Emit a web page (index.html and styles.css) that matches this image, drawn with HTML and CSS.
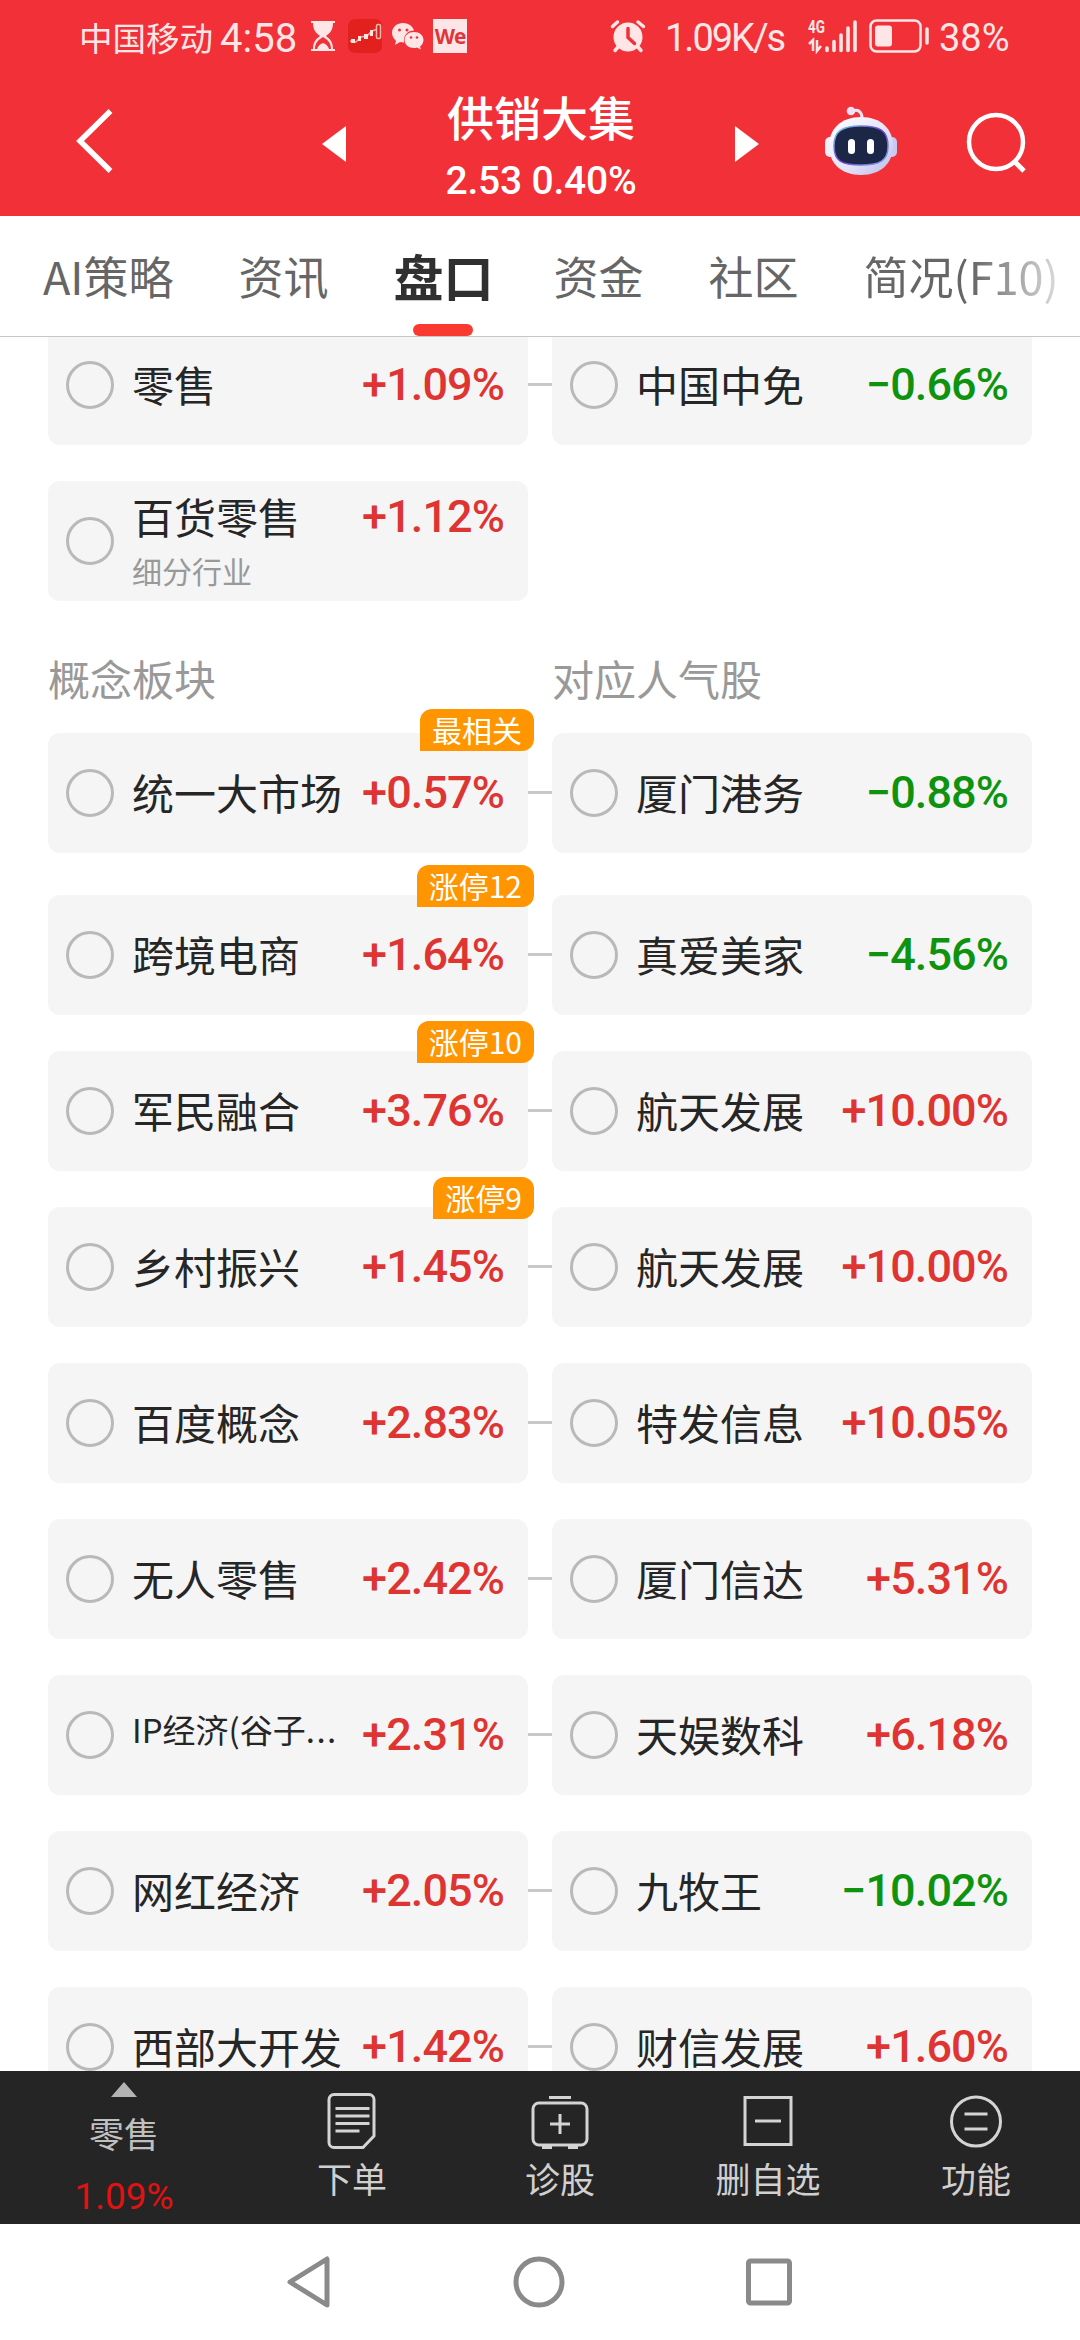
FILE: index.html
```
<!DOCTYPE html>
<html lang="zh-CN">
<head>
<meta charset="utf-8">
<title>供销大集</title>
<link rel="stylesheet" href="styles.css">
</head>
<body>
<div class="statusbar">
  <span class="carrier">中国移动</span>
  <span class="clock">4:58</span>
  <svg class="hourglass" width="24" height="31" viewBox="0 0 24 31"><path d="M0 0h24v2h-2c0 7-3 10-7 13 4 3 7 6 7 13h2v2H0v-2h2c0-7 3-10 7-13C5 12 2 9 2 2H0z" fill="#ffe6e6"/><path d="M4 28c0-6 3-9 8-12 5 3 8 6 8 12l-2 0c-1-3-3-5-6-6-3 1-5 3-6 6z" fill="#f13037"/></svg>
  <svg class="appicon" width="34" height="34" viewBox="0 0 34 34"><rect width="34" height="34" rx="7" fill="#e2211f"/><path d="M2 22l6 1 5-5 6-1 5-5 6-2" fill="none" stroke="#f3a9a0" stroke-width="1.500"/><path d="M3 20h4v4H3zM10 17h3v5h-3zM16 15h4v5h-4zM22 11h3v6h-3z" fill="#ffe6e6"/><rect x="28.500" y="5.500" width="4" height="14" rx="1.500" fill="#d81e1e" stroke="#f6b9a8" stroke-width="1.500"/></svg>
  <svg class="wechat" width="32" height="28" viewBox="0 0 32 28"><path d="M11 1C5 1 0 5 0 11c0 3 2 6 4 8l-1 4 5-3c1 .4 3 .4 4 .4C11 13 16 8.500 22 8.500 21 4 16 1 11 1z" fill="#ffe6e6"/><path d="M22 10c-5.500 0-9.500 3.500-9.500 8s4 8 9.500 8c1 0 2 0 3-.5l4 2-1-3c2-1.500 3.500-4 3.500-6.500 0-4.500-4-8-9.500-8z" fill="#ffe6e6"/><g fill="#f13037"><circle cx="7.500" cy="8" r="1.500"/><circle cx="15" cy="8" r="1.500"/><circle cx="19" cy="15.500" r="1.300"/><circle cx="25" cy="15.500" r="1.300"/></g></svg>
  <span class="we">We</span>
  <svg class="alarm" width="34" height="32" viewBox="0 0 34 32"><circle cx="17" cy="17" r="14.500" fill="#ffe6e6"/><path d="M1.500 6.500l5-4.500M32.500 6.500L27 2M7 27l-3 3.500M27 27l3 3.500" stroke="#ffe6e6" stroke-width="3.500" stroke-linecap="round"/><path d="M17 8.500v9l6.500 6" fill="none" stroke="#f13037" stroke-width="3.500" stroke-linecap="round"/></svg>
  <span class="speed">1.09K/s</span>
  <svg class="signal" width="50" height="34" viewBox="0 0 50 34"><text x="0" y="14" textLength="17" lengthAdjust="spacingAndGlyphs" class="g4">4G</text><path d="M1 25l4-4v11M9 21v11l4-5" fill="none" stroke="#ffe6e6" stroke-width="2.500"/><path d="M19 29v2.500M26 22.500v9M33 16v15.500M40 9v22.500M47 3v28.500" stroke="#ffe6e6" stroke-width="3.600" stroke-linecap="round"/></svg>
  <svg class="battery" width="60" height="34" viewBox="0 0 60 34"><rect x="1.500" y="1.500" width="50" height="31" rx="6" fill="none" stroke="#ffe6e6" stroke-width="2.500"/><rect x="6" y="6.500" width="17" height="21" rx="3" fill="#ffe6e6"/><path d="M58 10v14" stroke="#ffe6e6" stroke-width="3.500" stroke-linecap="round"/></svg>
  <span class="pct">38%</span>
</div>

<div class="header">
  <svg class="back" width="38" height="66" viewBox="0 0 38 66"><path d="M34.500 3L4 33l30.500 30" fill="none" stroke="#fff" stroke-width="5.500"/></svg>
  <svg class="prev" width="24" height="36" viewBox="0 0 24 36"><path d="M24 0v36L0 18z" fill="#fff"/></svg>
  <div class="title">
    <div class="name">供销大集</div>
    <div class="price">2.53 0.40%</div>
  </div>
  <svg class="next" width="24" height="36" viewBox="0 0 24 36"><path d="M0 0v36l24-18z" fill="#fff"/></svg>
  <svg class="robot" width="72" height="70" viewBox="0 0 72 70">
    <defs>
      <linearGradient id="shell" x1="0" y1="0" x2="1" y2="1"><stop offset="0" stop-color="#fff"/><stop offset=".6" stop-color="#e3e1f6"/><stop offset="1" stop-color="#b9bce8"/></linearGradient>
      <linearGradient id="rim" x1="0" y1="0" x2="1" y2="1"><stop offset="0" stop-color="#6fd3e8"/><stop offset=".5" stop-color="#6b3fd0"/><stop offset="1" stop-color="#7fa8f0"/></linearGradient>
    </defs>
    <path d="M28 5c5-2 9 1 9 7" fill="none" stroke="#f1e4f3" stroke-width="3"/>
    <circle cx="26" cy="5" r="4.300" fill="#efe2f4"/>
    <rect x="0" y="31" width="11" height="20" rx="5" fill="#f0effa"/>
    <rect x="61" y="31" width="11" height="20" rx="5" fill="#c5cbf1"/>
    <path d="M36 11c20 0 32 12 32 29S56 69 36 69 4 57 4 40s12-29 32-29z" fill="url(#shell)"/>
    <path d="M36 20c19 0 27 5 27 20S55 59 36 59 9 55 9 40s8-20 27-20z" fill="#1c2747" stroke="url(#rim)" stroke-width="1.500"/>
    <rect x="23" y="33" width="7" height="15" rx="3.500" fill="#fff"/><rect x="42" y="33" width="7" height="15" rx="3.500" fill="#fff"/>
  </svg>
  <svg class="search" width="62" height="62" viewBox="0 0 62 62"><circle cx="30" cy="30" r="27" fill="none" stroke="#fff" stroke-width="4.500"/><path d="M48 49l10 10" stroke="#fff" stroke-width="5"/></svg>
</div>

<div class="tabs">
  <span class="tab">AI策略</span>
  <span class="tab">资讯</span>
  <span class="tab active">盘口</span>
  <span class="tab">资金</span>
  <span class="tab">社区</span>
  <span class="tab last">简况(F10)</span>
</div>

<div class="content">
  <div class="row">
    <div class="card"><i class="radio"></i><span class="label">零售</span><b class="up">+1.09%</b></div>
    <div class="card"><i class="radio"></i><span class="label">中国中免</span><b class="down">−0.66%</b></div>
  </div>
  <div class="row single">
    <div class="card"><i class="radio"></i><span class="label two">百货零售<small>细分行业</small></span><b class="up raised">+1.12%</b></div>
  </div>
  <div class="heads"><span>概念板块</span><span>对应人气股</span></div>
  <div class="row first">
    <div class="card"><em class="badge">最相关</em><i class="radio"></i><span class="label">统一大市场</span><b class="up">+0.57%</b></div>
    <div class="card"><i class="radio"></i><span class="label">厦门港务</span><b class="down">−0.88%</b></div>
  </div>
  <div class="row">
    <div class="card"><em class="badge">涨停12</em><i class="radio"></i><span class="label">跨境电商</span><b class="up">+1.64%</b></div>
    <div class="card"><i class="radio"></i><span class="label">真爱美家</span><b class="down">−4.56%</b></div>
  </div>
  <div class="row">
    <div class="card"><em class="badge">涨停10</em><i class="radio"></i><span class="label">军民融合</span><b class="up">+3.76%</b></div>
    <div class="card"><i class="radio"></i><span class="label">航天发展</span><b class="up">+10.00%</b></div>
  </div>
  <div class="row">
    <div class="card"><em class="badge">涨停9</em><i class="radio"></i><span class="label">乡村振兴</span><b class="up">+1.45%</b></div>
    <div class="card"><i class="radio"></i><span class="label">航天发展</span><b class="up">+10.00%</b></div>
  </div>
  <div class="row">
    <div class="card"><i class="radio"></i><span class="label">百度概念</span><b class="up">+2.83%</b></div>
    <div class="card"><i class="radio"></i><span class="label">特发信息</span><b class="up">+10.05%</b></div>
  </div>
  <div class="row">
    <div class="card"><i class="radio"></i><span class="label">无人零售</span><b class="up">+2.42%</b></div>
    <div class="card"><i class="radio"></i><span class="label">厦门信达</span><b class="up">+5.31%</b></div>
  </div>
  <div class="row">
    <div class="card"><i class="radio"></i><span class="label small">IP经济(谷子<span class="dots">...</span></span><b class="up">+2.31%</b></div>
    <div class="card"><i class="radio"></i><span class="label">天娱数科</span><b class="up">+6.18%</b></div>
  </div>
  <div class="row">
    <div class="card"><i class="radio"></i><span class="label">网红经济</span><b class="up">+2.05%</b></div>
    <div class="card"><i class="radio"></i><span class="label">九牧王</span><b class="down">−10.02%</b></div>
  </div>
  <div class="row">
    <div class="card"><i class="radio"></i><span class="label">西部大开发</span><b class="up">+1.42%</b></div>
    <div class="card"><i class="radio"></i><span class="label">财信发展</span><b class="up">+1.60%</b></div>
  </div>
</div>

<div class="toolbar">
  <div class="sector">
    <svg width="26" height="15" viewBox="0 0 26 15"><path d="M13 0l13 15H0z" fill="#b4b4b4"/></svg>
    <span class="sname">零售</span>
    <span class="schg">1.09%</span>
  </div>
  <div class="tool"><svg width="52" height="58" viewBox="0 0 52 58"><path d="M8 2.500h35a5 5 0 0 1 5 5V44L37 55.500H8a5 5 0 0 1-5-5v-43a5 5 0 0 1 5-5z"/><path d="M9.500 16.500h34M9.500 24h34M9.500 31.500h34M9.500 39h24"/></svg><span>下单</span></div>
  <div class="tool"><svg width="60" height="58" viewBox="0 0 60 58"><rect x="3" y="11" width="54" height="42" rx="6"/><path d="M19 5.500h22M30 22v20M20 32h20M12 55.500h10M38 55.500h10"/></svg><span>诊股</span></div>
  <div class="tool"><svg width="52" height="58" viewBox="0 0 52 58"><rect x="3" y="5.500" width="46" height="47"/><path d="M13 29h26"/></svg><span>删自选</span></div>
  <div class="tool"><svg width="54" height="58" viewBox="0 0 54 58"><circle cx="27" cy="29.500" r="24.500"/><path d="M15.500 22h23M15.500 37h23"/></svg><span>功能</span></div>
</div>

<div class="navbar">
  <svg width="46" height="54" viewBox="0 0 46 54"><path d="M41 4v46L4 27z"/></svg>
  <svg width="54" height="54" viewBox="0 0 54 54"><circle cx="27" cy="27" r="23"/></svg>
  <svg width="46" height="54" viewBox="0 0 46 54"><rect x="2.500" y="6" width="41" height="42" rx="2"/></svg>
</div>
</body>
</html>
```
FILE: styles.css
```
* { box-sizing: border-box; }
body { margin:0; width:1080px; height:2340px; overflow:hidden; background:#fff; color:#262626; font-family:"Noto Sans CJK SC", sans-serif; display:flex; flex-direction:column; }
svg { display:block; flex:none; overflow:visible; }

.statusbar { height:72px; background:#f13037; color:#ffe6e6; display:flex; align-items:center; padding-left:79px; white-space:nowrap; flex:none; }
.carrier { font-size:33.500px; font-weight:400; width:141px; }
.clock { font-size:40px; font-family:Roboto, sans-serif; width:91px; padding-top:5px; }
.hourglass { margin-right:13px; }
.appicon { margin-right:10px; }
.wechat { margin-right:9px; }
.we { width:34px; height:34px; background:#ffe6e6; color:#e0353a; font:700 21px/34px "Open Sans", sans-serif; text-align:center; letter-spacing:-1px; }
.alarm { margin-left:144px; }
.speed { font:400 38px Roboto, sans-serif; letter-spacing:-2px; width:143px; margin-left:20px; padding-top:4px; }
.g4 { font:700 18px Roboto, sans-serif; fill:#ffe6e6; }
.battery { margin:0 10px 0 11px; }
.pct { font:400 38px Roboto, sans-serif; padding-top:4px; }

.header { height:144px; background:#f13037; color:#fff; display:flex; align-items:center; padding-left:76px; flex:none; }
.back { margin-bottom:6px; }
.prev { margin-left:208px; }
.title { width:230px; margin-left:80px; text-align:center; flex:none; white-space:nowrap; padding-top:4px; }
.name { font-size:47px; line-height:70px; font-weight:500; }
.price { font:500 39px/60px Roboto, sans-serif; letter-spacing:-.2px; }
.next { margin-left:79px; }
.robot { margin-left:66px; margin-bottom:6px; }
.search { margin-left:69px; margin-bottom:2px; }

.tabs { height:121px; border-bottom:1.500px solid #c6c6c6; display:flex; align-items:center; color:#666; font-size:45px; flex:none; padding-left:43px; white-space:nowrap; }
.tab { margin-right:65px; height:120px; line-height:119px; }
.active { color:#303030; font-size:50px; font-weight:700; margin-right:60px; position:relative; }
.active::after { content:""; position:absolute; left:19px; bottom:0; width:60px; height:12px; border-radius:6px; background:#fa3a30; }
.last { margin-right:0; background:linear-gradient(90deg, #666 55%, #ddd 100%); -webkit-background-clip:text; color:transparent; }

.content { flex:1; overflow:hidden; padding:0 48px; }
.row { display:flex; gap:24px; margin-bottom:36px; position:relative; }
.row::before { content:""; position:absolute; left:480px; top:58px; width:24px; height:3px; background:#c8c8c8; }
.row.single::before { display:none; }
.row:first-child { margin-top:-12px; }
.card { width:480px; height:120px; background:#f5f5f5; border-radius:12px; display:flex; align-items:center; padding:0 24px 0 18px; position:relative; white-space:nowrap; }
.radio { width:48px; height:48px; border:3px solid #b9b9b9; border-radius:50%; margin-right:18px; flex:none; }
.label { font-size:42px; line-height:60px; margin-bottom:2px; }
.small { font-size:33px; line-height:50px; margin-bottom:12px; }
.dots { letter-spacing:1.500px; }
.two { display:flex; flex-direction:column; margin-bottom:0; padding-bottom:2px; }
.two small { font-size:30px; line-height:48px; color:#999; }
.card b { margin-left:auto; font:500 45px/60px Roboto, sans-serif; letter-spacing:-.9px; }
.card b.raised { align-self:flex-start; margin-top:6px; }
.up { color:#de3533; }
.down { color:#0e930e; }
.badge { position:absolute; right:-6px; top:-30px; height:42px; padding:0 12px; background:#ff9500; color:#fff; border-radius:12px 12px 12px 0; font-size:30px; line-height:41px; font-style:normal; }
.first { margin-bottom:42px; }
.first .badge { top:-24px; }
.heads { display:flex; height:96px; color:#999; font-size:42px; line-height:82px; }
.heads span { width:504px; flex:none; }

.toolbar { height:153px; background:#252525; color:#d0d0d0; display:flex; flex:none; }
.sector { width:248px; display:flex; flex-direction:column; align-items:center; padding-top:11px; }
.sname { font-size:35px; line-height:50px; margin-top:11px; color:#c0c0c0; }
.schg { font:400 37px/50px Roboto, sans-serif; color:#e01212; margin-top:14px; }
.tool { width:208px; display:flex; flex-direction:column; align-items:center; padding-top:21px; font-size:35px; line-height:56px; }
.tool svg { fill:none; stroke:#d4d4d4; stroke-width:3; }
.navbar { height:116px; display:flex; flex:none; padding:31px 0 0 286px; }
.navbar svg { fill:none; stroke:#8a8a8a; stroke-width:5; stroke-linejoin:round; margin-right:180px; }
```
